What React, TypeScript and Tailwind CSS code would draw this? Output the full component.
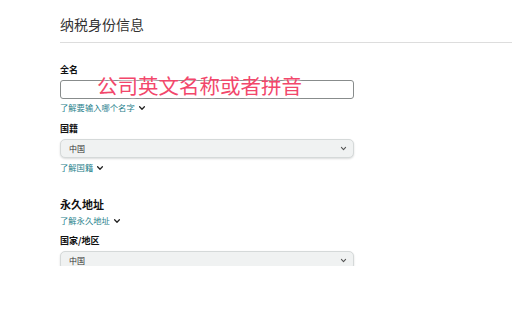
import React from "react";

const Chevron = ({ className = "" }: { className?: string }) => (
  <svg viewBox="0 0 10 10" className={className} fill="none" stroke="currentColor" strokeWidth="1.6" strokeLinecap="round" strokeLinejoin="round">
    <path d="M2 3.5 L5 6.5 L8 3.5" />
  </svg>
);

const Link = ({ text, cls = "" }: { text: string; cls?: string }) => (
  <div className={`flex items-center gap-[3px] text-[8.3px] leading-[11px] text-[#1f7f8c] ${cls}`}>
    <span>{text}</span>
    <Chevron className="w-[8px] h-[8px] text-[#222]" />
  </div>
);

const Select = ({ cls = "" }: { cls?: string }) => (
  <div className={`h-[19px] rounded-[5px] border border-[#d5d9d9] bg-[#f0f2f2] shadow-[0_1px_2px_rgba(15,17,17,0.15)] flex items-center justify-between pl-[8px] pr-[6px] ${cls}`}>
    <span className="text-[8px] leading-[10px] text-[#333]">中国</span>
    <Chevron className="w-[7px] h-[7px] text-[#555]" />
  </div>
);

export default function App() {
  return (
    <div className="w-[512px] h-[334px] bg-white" style={{ fontFamily: '"Noto Sans CJK SC", "Noto Sans", sans-serif' }}>
      <div className="h-[266px] overflow-hidden">
        <div className="pl-[60px] pt-[14px]">
          <h1 className="text-[14px] leading-[20px] text-[#333]">纳税身份信息</h1>
          <div className="mt-[8px] h-px bg-[#dddddd]" />
          <div className="pr-[158px]">
            <div className="mt-[21px] text-[9px] leading-[12px] font-bold text-[#111]">全名</div>
            <div className="relative mt-[4px] h-[19px] rounded-[3px] border border-[#888c8c] bg-white">
              <span className="absolute left-[36px] top-[-6px] whitespace-nowrap text-[20.5px] leading-[20px] font-normal text-[#f2476b] [text-shadow:0_2px_3px_white]">
                公司英文名称或者拼音
              </span>
            </div>
            <Link text="了解要输入哪个名字" cls="mt-[3px]" />
            <div className="mt-[10px] text-[9px] leading-[12px] font-bold text-[#111]">国籍</div>
            <Select cls="mt-[4px]" />
            <Link text="了解国籍" cls="mt-[4px]" />
            <div className="mt-[24px] text-[11px] leading-[15px] font-bold text-[#111]">永久地址</div>
            <Link text="了解永久地址" cls="mt-[3px]" />
            <div className="mt-[9px] text-[9px] leading-[12px] font-bold text-[#111]">国家/地区</div>
            <Select cls="mt-[4px]" />
          </div>
        </div>
      </div>
    </div>
  );
}
